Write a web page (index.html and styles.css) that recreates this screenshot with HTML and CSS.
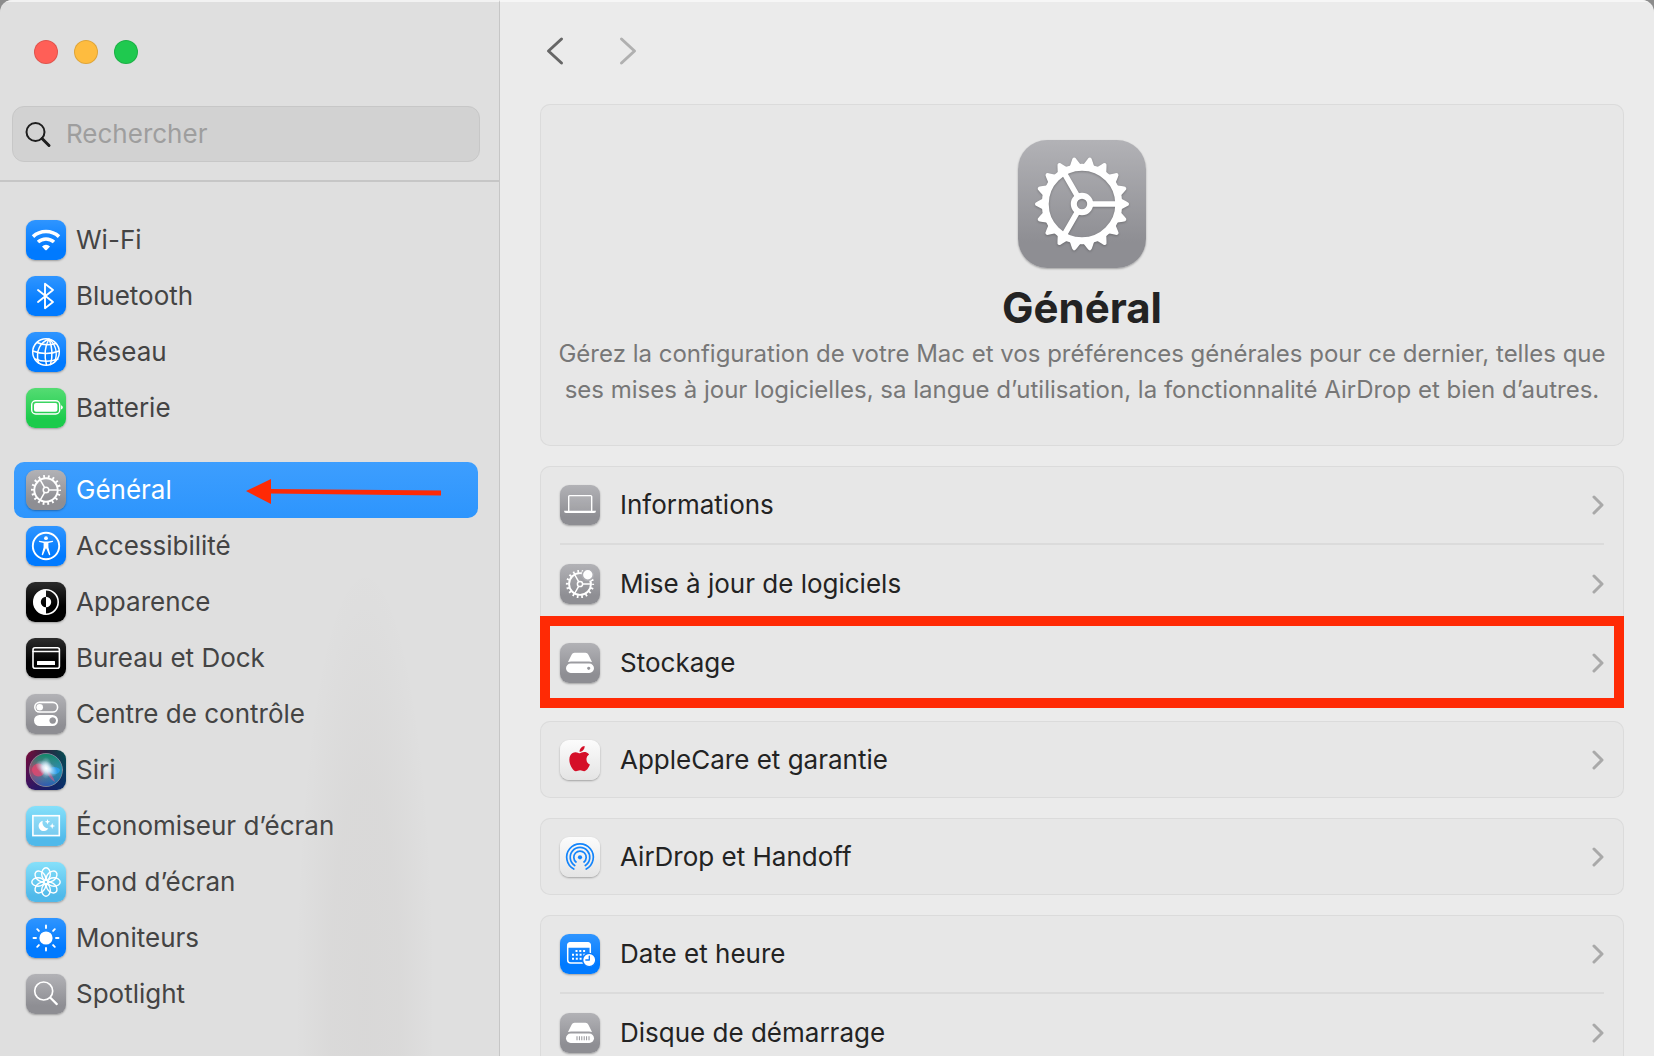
FILE: index.html
```html
<!DOCTYPE html>
<html lang="fr">
<head>
  <meta charset="UTF-8">
  <title>Réglages Système</title>
  <link rel="stylesheet" href="styles.css">
</head>
<body>

<div class="window">
  <aside class="sidebar">
    <div class="lights">
      <button class="light red" aria-label="Fermer"></button>
      <button class="light yellow" aria-label="Réduire"></button>
      <button class="light green" aria-label="Agrandir"></button>
    </div>

    <label class="search">
      <svg width="28" height="28" viewBox="0 0 28 28"><circle cx="11.5" cy="12" r="9"/><path d="M18 18.5l7 7" stroke-width="3"/></svg>
      <input type="search" placeholder="Rechercher" aria-label="Rechercher">
    </label>

    <nav class="menu">
      <div class="group">
        <a href="#wifi" class="item">
          <svg class="icon blue" viewBox="0 0 40 40">
            <path d="M7 16.6a19.2 19.2 0 0 1 26 0M12 22a12 12 0 0 1 16 0" stroke-width="3.6" stroke-linecap="butt"/>
            <path class="fill" d="M16 26.4a5.8 5.8 0 0 1 8 0l-3.2 3.5q-.8.8-1.6 0z"/>
          </svg>
          Wi-Fi
        </a>
        <a href="#bluetooth" class="item">
          <svg class="icon blue" viewBox="0 0 40 40"><path d="M12 14l15 12-8 6.2V7.800L27 14 12 26" stroke-width="1.9"/></svg>
          Bluetooth
        </a>
        <a href="#reseau" class="item">
          <svg class="icon blue" viewBox="0 0 40 40">
            <g stroke-width="1.5">
              <circle cx="20" cy="20" r="13.3"/>
              <path d="M23 7c-8 3-14 11-10.5 24M23 7c-4 7-5 16-2.5 26M23 7c3 7 4 16 1.5 25.500M23 7c6 5 9 13 6 22"/>
              <path d="M11 10.5c6 3 12 2.800 19 1M6.800 19c8 3 18 3.200 26.300 0M9 27c7 2.800 16 2.700 23 0"/>
            </g>
          </svg>
          Réseau
        </a>
        <a href="#batterie" class="item">
          <svg class="icon lime" viewBox="0 0 40 40">
            <rect x="5.7" y="12.7" width="28" height="13.3" rx="4" stroke-width="1.4"/>
            <rect class="fill" x="8" y="15" width="23.4" height="8.7" rx="2"/>
            <path class="fill" d="M35 17.300q1.800.6 1.800 2.100t-1.800 2.100z"/>
          </svg>
          Batterie
        </a>
      </div>

      <div class="group">
        <a href="#general" class="item selected" aria-current="page">
          <svg class="icon gray" viewBox="0 0 40 40">
            <circle cx="20" cy="20" r="11.7" stroke-width="1.9"/>
            <circle cx="20" cy="20" r="13.5" stroke-width="3" stroke-dasharray="1.8 2.912" stroke-dashoffset=".9" stroke-linecap="butt"/>
            <circle cx="20" cy="20" r="2.8" stroke-width="1.5"/>
            <path d="M23 20h8M18.500 17.400l-4-7M18.500 22.600l-4 7" stroke-width="1.5"/>
          </svg>
          Général
          <svg class="arrow" viewBox="0 0 196 26"><path d="M0 12L25 0v25z"/><path d="M24 10l171 1.500v5L24 14.500z"/></svg>
        </a>
        <a href="#accessibilite" class="item">
          <svg class="icon blue" viewBox="0 0 40 40">
            <circle cx="20" cy="20" r="13.2" stroke-width="1.9"/>
            <circle class="fill" cx="20" cy="12.2" r="1.9"/>
            <path class="fill" d="M13.300 14.800l4.900.8h3.600l4.900-.8q1 .5 0 1.200l-4.300 1.100v4.200l1.900 7.300q-.5 1.100-1.300.3L20.300 22.600h-.6L17 28.900q-.8.800-1.300-.3l1.900-7.300v-4.200L13.300 16q-1-.7 0-1.200z"/>
          </svg>
          Accessibilité
        </a>
        <a href="#apparence" class="item">
          <svg class="icon black" viewBox="0 0 40 40">
            <circle cx="20" cy="20" r="12.2" stroke-width="1.6"/>
            <path class="fill" d="M20 7.500a12.500 12.500 0 0 0 0 25v-7.300a5.200 5.200 0 0 1 0-10.400z"/>
            <path class="fill" d="M20 14.800a5.200 5.200 0 0 1 0 10.400z"/>
          </svg>
          Apparence
        </a>
        <a href="#bureau" class="item">
          <svg class="icon black" viewBox="0 0 40 40">
            <rect x="7" y="9.8" width="26.4" height="20.4" rx="2" stroke-width="1.6"/>
            <path d="M7 13.600h26" stroke-width="1.5"/>
            <rect class="fill" x="11" y="23" width="18" height="4" rx=".6"/>
          </svg>
          Bureau et Dock
        </a>
        <a href="#controle" class="item">
          <svg class="icon gray" viewBox="0 0 40 40">
            <rect x="8.8" y="8.4" width="22.8" height="9.6" rx="4.8" stroke-width="1.6"/>
            <circle class="fill" cx="13.7" cy="13.2" r="3.3"/>
            <path class="fill" fill-rule="evenodd" d="M13.500 21h13a5.500 5.500 0 0 1 0 11h-13a5.500 5.500 0 0 1 0-11zM26.700 23.200a3.300 3.300 0 1 0 .01 0z"/>
          </svg>
          Centre de contrôle
        </a>
        <a href="#siri" class="item">
          <svg class="icon siri" viewBox="0 0 40 40">
            <defs>
              <linearGradient id="orb" x1="0" y1=".4" x2="1" y2=".5">
                <stop offset="0" stop-color="#d92a5c"/>
                <stop offset=".45" stop-color="#6f7590"/>
                <stop offset="1" stop-color="#168fc0"/>
              </linearGradient>
              <linearGradient id="orb-top" x1="0" y1="0" x2="0" y2="1">
                <stop offset="0" stop-color="#0c8a68"/>
                <stop offset=".5" stop-color="#2a8f8a" stop-opacity=".2"/>
                <stop offset="1" stop-color="#2350b8" stop-opacity=".8"/>
              </linearGradient>
              <radialGradient id="glow">
                <stop offset="0" stop-color="#fff"/>
                <stop offset=".35" stop-color="#e8f6ff" stop-opacity=".8"/>
                <stop offset="1" stop-color="#bfe6ff" stop-opacity="0"/>
              </radialGradient>
            </defs>
            <circle cx="20" cy="20" r="16.5" fill="url(#orb)" stroke="#8b8e9c" stroke-width=".8"/>
            <circle cx="20" cy="20" r="16" fill="url(#orb-top)" stroke="none"/>
            <circle cx="12.5" cy="20" r="6.5" fill="#f0446e" fill-opacity=".7" stroke="none"/>
            <path d="M21 20c5-5 12-3 13 0-1 5-7 6-13 0z" fill="#2ba0ee" fill-opacity=".9" stroke="none"/>
            <path d="M20 19c4 3 7 7 9 13-4-2-8-7-9-13z" fill="#d05a90" fill-opacity=".6" stroke="none"/>
            <ellipse cx="20.5" cy="18.5" rx="12" ry="7" fill="url(#glow)" stroke="none" transform="rotate(30 20.5 18.5)"/>
            <ellipse cx="20" cy="18" rx="6" ry="11" fill="url(#glow)" fill-opacity=".7" stroke="none"/>
          </svg>
          Siri
        </a>
        <a href="#economiseur" class="item">
          <svg class="icon sky" viewBox="0 0 40 40">
            <rect x="6.9" y="9.7" width="26.4" height="19.9" stroke-width="1.6" stroke-linejoin="miter" fill="#fff" fill-opacity=".2"/>
            <path class="fill" d="M16.800 14.800a5.200 5.200 0 1 0 5.600 7.500 5.600 5.600 0 0 1-5.600-7.500zM21.500 13l.7 2 2 .7-2 .7-.7 2-.7-2-2-.7 2-.7zM26.200 17l.8 2.200 2.200.8-2.200.8-.8 2.200-.8-2.200-2.200-.8 2.200-.8z"/>
          </svg>
          Économiseur d’écran
        </a>
        <a href="#fond" class="item">
          <svg class="icon sky" viewBox="0 0 40 40">
            <defs><ellipse id="petal" cx="20" cy="12" rx="4.3" ry="6.2"/></defs>
            <g stroke-width="1.4">
              <use href="#petal"/>
              <use href="#petal" transform="rotate(45 20 20)"/>
              <use href="#petal" transform="rotate(90 20 20)"/>
              <use href="#petal" transform="rotate(135 20 20)"/>
              <use href="#petal" transform="rotate(180 20 20)"/>
              <use href="#petal" transform="rotate(225 20 20)"/>
              <use href="#petal" transform="rotate(270 20 20)"/>
              <use href="#petal" transform="rotate(315 20 20)"/>
            </g>
          </svg>
          Fond d’écran
        </a>
        <a href="#moniteurs" class="item">
          <svg class="icon blue" viewBox="0 0 40 40">
            <circle class="fill" cx="20" cy="20" r="6.6"/>
            <path d="M20 7.500v2.500M20 30v2.500M7.500 20H10M30 20h2.500M11.200 11.200l1.700 1.700M27.100 27.100l1.700 1.700M11.200 28.800l1.700-1.700M27.100 12.900l1.700-1.700" stroke-width="1.9"/>
          </svg>
          Moniteurs
        </a>
        <a href="#spotlight" class="item">
          <svg class="icon gray" viewBox="0 0 40 40"><circle cx="17.7" cy="17" r="9" stroke-width="1.7"/><path d="M24.400 23.800l6.400 6.300" stroke-width="2.2"/></svg>
          Spotlight
        </a>
      </div>
    </nav>
  </aside>

  <main class="main">
    <div class="toolbar">
      <button class="nav" aria-label="Précédent"><svg width="30" height="30" viewBox="0 0 30 30"><path d="M21.500 3L8.500 15l13 12"/></svg></button>
      <button class="nav" aria-label="Suivant" disabled><svg width="30" height="30" viewBox="0 0 30 30"><path d="M8.500 3l13 12-13 12"/></svg></button>
    </div>

    <section class="card intro">
      <svg class="icon gray large" viewBox="0 0 128 128">
        <defs><path id="tooth" d="M102 58l6.500 3.400q2.600 1 2.600 2.600t-2.600 2.600L102 70zM26 58l-6.500 3.400q-2.600 1-2.600 2.600t2.600 2.600L26 70z"/></defs>
        <g class="gear">
          <circle cx="64" cy="64" r="36.8" stroke-width="7"/>
          <circle cx="64" cy="64" r="8.2" stroke-width="6"/>
          <path d="M74 64h25M58.900 55.200L46.500 33.700M58.900 72.800L46.500 94.300" stroke-width="5.6"/>
          <g class="fill">
            <use href="#tooth"/>
            <use href="#tooth" transform="rotate(20 64 64)"/>
            <use href="#tooth" transform="rotate(40 64 64)"/>
            <use href="#tooth" transform="rotate(60 64 64)"/>
            <use href="#tooth" transform="rotate(80 64 64)"/>
            <use href="#tooth" transform="rotate(100 64 64)"/>
            <use href="#tooth" transform="rotate(120 64 64)"/>
            <use href="#tooth" transform="rotate(140 64 64)"/>
            <use href="#tooth" transform="rotate(160 64 64)"/>
          </g>
        </g>
      </svg>
      <h1>Général</h1>
      <p>Gérez la configuration de votre Mac et vos préférences générales pour ce dernier, telles que ses mises à jour logicielles, sa langue d’utilisation, la fonctionnalité AirDrop et bien d’autres.</p>
    </section>

    <section class="card">
      <a href="#informations" class="row">
        <svg class="icon gray" viewBox="0 0 40 40">
          <path d="M8.700 26V11.600q0-1 1-1h21q1 0 1 1V26" stroke-width="1.4" fill="#fff" fill-opacity=".12"/>
          <path d="M4 25.800h32q0 2.200-2 2.200H6q-2 0-2-2.200z" class="fill"/>
        </svg>
        <span>Informations</span>
        <svg class="chevron" viewBox="0 0 12 20"><path d="M2 2l8 8-8 8"/></svg>
      </a>
      <a href="#mise-a-jour" class="row">
        <svg class="icon gray" viewBox="0 0 40 40">
          <circle cx="20" cy="20" r="10.9" stroke-width="1.9"/>
          <circle cx="20" cy="20" r="12.7" stroke-width="2.8" stroke-dasharray="1.7 2.733" stroke-dashoffset=".85" stroke-linecap="butt"/>
          <circle cx="20" cy="20" r="2.6" stroke-width="1.5"/>
          <path d="M23 20h7M18.500 17.400l-3.600-6.400M18.500 22.600L14.900 29" stroke-width="1.5"/>
          <circle cx="27.8" cy="10.7" r="5.5" fill="#fff" stroke="#adadb2" stroke-width="1.6"/>
        </svg>
        <span>Mise à jour de logiciels</span>
        <svg class="chevron" viewBox="0 0 12 20"><path d="M2 2l8 8-8 8"/></svg>
      </a>
      <a href="#stockage" class="row highlighted">
        <svg class="icon gray" viewBox="0 0 40 40">
          <path class="fill" d="M14.500 9.800h11q2 0 2.900 1.900l3.600 7.200q-1.500-.5-3-.5H11q-1.500 0-3 .5l3.600-7.200q.9-1.900 2.900-1.900z"/>
          <path class="fill" fill-rule="evenodd" d="M10.700 20.500h18.600a4.700 4.700 0 0 1 0 9.400H10.700a4.700 4.700 0 0 1 0-9.400zM28.700 23.700a1.600 1.600 0 1 0 .01 0z"/>
        </svg>
        <span>Stockage</span>
        <svg class="chevron" viewBox="0 0 12 20"><path d="M2 2l8 8-8 8"/></svg>
      </a>
    </section>

    <section class="card">
      <a href="#applecare" class="row">
        <svg class="icon white" viewBox="0 0 40 40">
          <path transform="translate(7 6) scale(1.05)" fill="#d50f28" stroke="none" d="M12.152 6.896c-.948 0-2.415-1.078-3.960-1.040-2.040.027-3.910 1.183-4.961 3.014-2.117 3.675-.546 9.103 1.519 12.090 1.013 1.454 2.208 3.090 3.792 3.039 1.520-.065 2.090-.987 3.935-.987 1.831 0 2.350.987 3.960.948 1.637-.026 2.676-1.480 3.676-2.948 1.156-1.688 1.636-3.325 1.662-3.415-.039-.013-3.182-1.221-3.220-4.857-.026-3.040 2.480-4.494 2.597-4.559-1.429-2.090-3.623-2.324-4.390-2.376-2-.156-3.675 1.090-4.610 1.090zM15.530 3.830c.843-1.012 1.400-2.427 1.245-3.830-1.207.052-2.662.805-3.532 1.818-.78.896-1.454 2.338-1.273 3.714 1.338.104 2.715-.688 3.559-1.701"/>
        </svg>
        <span>AppleCare et garantie</span>
        <svg class="chevron" viewBox="0 0 12 20"><path d="M2 2l8 8-8 8"/></svg>
      </a>
    </section>

    <section class="card">
      <a href="#airdrop" class="row">
        <svg class="icon white airdrop" viewBox="0 0 40 40">
          <path d="M13.800 32a13.300 13.300 0 1 1 12.400 0M14.700 28.500a9.800 9.800 0 1 1 10.600 0M16 25a6.200 6.200 0 1 1 8 0" stroke-width="1.7"/>
          <circle cx="20" cy="20.3" r="2.1"/>
        </svg>
        <span>AirDrop et Handoff</span>
        <svg class="chevron" viewBox="0 0 12 20"><path d="M2 2l8 8-8 8"/></svg>
      </a>
    </section>

    <section class="card">
      <a href="#date" class="row">
        <svg class="icon blue" viewBox="0 0 40 40">
          <rect x="7.7" y="8.7" width="22.6" height="20.3" rx="3" stroke-width="1.5"/>
          <path class="fill" d="M7.500 13.800v-2.500q0-3 3-3h17q3 0 3 3v2.500z"/>
          <path d="M15.500 17h11M12 20.800h14.500M12 24.700h11" stroke-width="2" stroke-dasharray="2 1.8" stroke-linecap="butt"/>
          <circle cx="29.2" cy="26" r="6.6" fill="#fff" stroke="#0a7dff" stroke-width="1.4"/>
          <path d="M29.300 22.200V26h-3.500" stroke="#0a7dff" stroke-width="1.3"/>
        </svg>
        <span>Date et heure</span>
        <svg class="chevron" viewBox="0 0 12 20"><path d="M2 2l8 8-8 8"/></svg>
      </a>
      <a href="#disque" class="row">
        <svg class="icon gray" viewBox="0 0 40 40">
          <path class="fill" d="M14.500 9.800h11q2 0 2.900 1.900l3.600 7.200q-1.500-.5-3-.5H11q-1.500 0-3 .5l3.600-7.200q.9-1.900 2.900-1.900z"/>
          <rect class="fill" x="6" y="20.5" width="28" height="9.4" rx="4.7"/>
          <path d="M16.500 25.200h13" stroke="#939398" stroke-width="4" stroke-dasharray="1 1.4" stroke-linecap="butt"/>
        </svg>
        <span>Disque de démarrage</span>
        <svg class="chevron" viewBox="0 0 12 20"><path d="M2 2l8 8-8 8"/></svg>
      </a>
    </section>
  </main>
</div>

</body>
</html>
```
FILE: styles.css
```css
* { box-sizing: border-box; }
body {
  margin: 0;
  background: #8c8c8c;
  color: #232323;
  font-family: Inter, "Liberation Sans", sans-serif;
  font-size: 26px;
  line-height: 36px;
}
a { color: inherit; text-decoration: none; }
button { padding: 0; border: none; background: none; }

.window {
  display: flex;
  height: 100vh;
  overflow: hidden;
  border-radius: 12px 12px 0 0;
}

/* Sidebar */
.sidebar {
  flex: 0 0 500px;
  border-top: 2px solid #f2f2f2;
  border-right: 1px solid #c6c6c6;
  background: radial-gradient(ellipse 70px 440px at 365px 1000px, rgba(60, 40, 30, 0.04), rgba(60, 40, 30, 0.03) 50%, transparent), #dfdfdf;
  overflow: hidden;
}
.lights {
  display: flex;
  gap: 16px;
  padding: 38px 34px 42px;
}
.light {
  width: 24px;
  height: 24px;
  border: 1px solid rgba(0, 0, 0, 0.12);
  border-radius: 50%;
}
.red { background: #ff5f57; }
.yellow { background: #febc3f; }
.green { background: #1fc94f; }

.search {
  display: flex;
  align-items: center;
  gap: 14px;
  height: 56px;
  margin: 0 19px 18px 12px;
  padding: 0 11px;
  border: 1px solid #c7c7c7;
  border-radius: 12px;
  background: #d2d2d2;
}
.search svg {
  flex: none;
  fill: none;
  stroke: #1e1e1e;
  stroke-width: 2;
  stroke-linecap: round;
}
.search input {
  flex: 1;
  min-width: 0;
  padding: 0;
  border: none;
  outline: none;
  background: none;
  font: inherit;
}
.search input::placeholder { color: #9e9e9e; opacity: 1; }

.menu {
  display: flex;
  flex-direction: column;
  gap: 26px;
  padding: 30px 21px 0 14px;
  border-top: 2px solid #c6c6c6;
}
.item {
  position: relative;
  display: flex;
  align-items: center;
  gap: 10px;
  height: 56px;
  padding: 0 12px;
  border-radius: 10px;
  color: #444;
}
.selected {
  background: linear-gradient(#3d9efe, #2d95fd);
  color: white;
}
.arrow {
  position: absolute;
  left: 232px;
  top: 17px;
  width: 196px;
  height: 26px;
  fill: #ff2a05;
}

/* Icons */
.icon {
  flex: none;
  width: 40px;
  height: 40px;
  border-radius: 9px;
  box-shadow: 0 1px 2px rgba(0, 0, 0, 0.3);
  fill: none;
  stroke: white;
  stroke-linecap: round;
  stroke-linejoin: round;
}
.fill { fill: white; stroke: none; }
.blue { background: linear-gradient(#2f95ff, #007aff 75%); }
.lime { background: linear-gradient(#55dc73, #1bcb4b 80%); }
.gray { background: linear-gradient(#b2b2b6, #8e8e93 80%); }
.black { background: linear-gradient(#2c2c2c, #000 60%); }
.sky { background: linear-gradient(#86e0fa, #50b9ea 85%); }
.white { background: linear-gradient(#fcfcfc, #e4e4e4); }
.siri { background: linear-gradient(rgba(0, 0, 0, 0), rgba(10, 25, 130, 0.6)), linear-gradient(90deg, #7d0a38, #2d2340 50%, #05504e); }
.airdrop { stroke: #1485fb; }
.airdrop circle { fill: #1485fb; stroke: none; }
.large {
  width: 128px;
  height: 128px;
  border-radius: 29px;
}
.gear {
  stroke-linecap: butt;
  filter: drop-shadow(0 1px 1px rgba(0, 0, 0, 0.25));
}

/* Main panel */
.main {
  flex: 1;
  display: flex;
  flex-direction: column;
  gap: 20px;
  min-width: 0;
  padding: 0 30px 0 40px;
  border-top: 2px solid #f6f6f6;
  background: #ebebeb;
  overflow: hidden;
}
.toolbar {
  display: flex;
  gap: 43px;
  padding: 34px 0 18px;
}
.nav { width: 30px; height: 30px; }
.nav svg {
  display: block;
  fill: none;
  stroke: #666;
  stroke-width: 3;
  stroke-linecap: round;
  stroke-linejoin: round;
}
.nav:disabled svg { stroke: #b0b0b0; }

.card {
  flex: none;
  border-radius: 10px;
  background: #e7e7e7;
  box-shadow: inset 0 0 0 1px #dbdbdb;
}
.intro {
  display: flex;
  flex-direction: column;
  align-items: center;
  padding: 36px 12px 38px;
  text-align: center;
}
h1 {
  margin: 14px 0 2px;
  font-size: 42px;
  line-height: 52px;
  font-weight: 700;
}
.intro p {
  margin: 0;
  color: #777;
  font-size: 24px;
  text-wrap: balance;
}

.row {
  position: relative;
  display: flex;
  align-items: center;
  gap: 20px;
  height: 77px;
  margin: 0 20px;
}
.row + .row {
  height: 79px;
  border-top: 2px solid #dbdbdb;
}
.row span { flex: 1; }
.chevron {
  width: 12px;
  height: 20px;
  fill: none;
  stroke: #a9a9a9;
  stroke-width: 3;
  stroke-linecap: round;
  stroke-linejoin: round;
}
.highlighted::after {
  content: "";
  position: absolute;
  inset: -8px -20px -7px;
  border: 10px solid #ff2a05;
}
```
